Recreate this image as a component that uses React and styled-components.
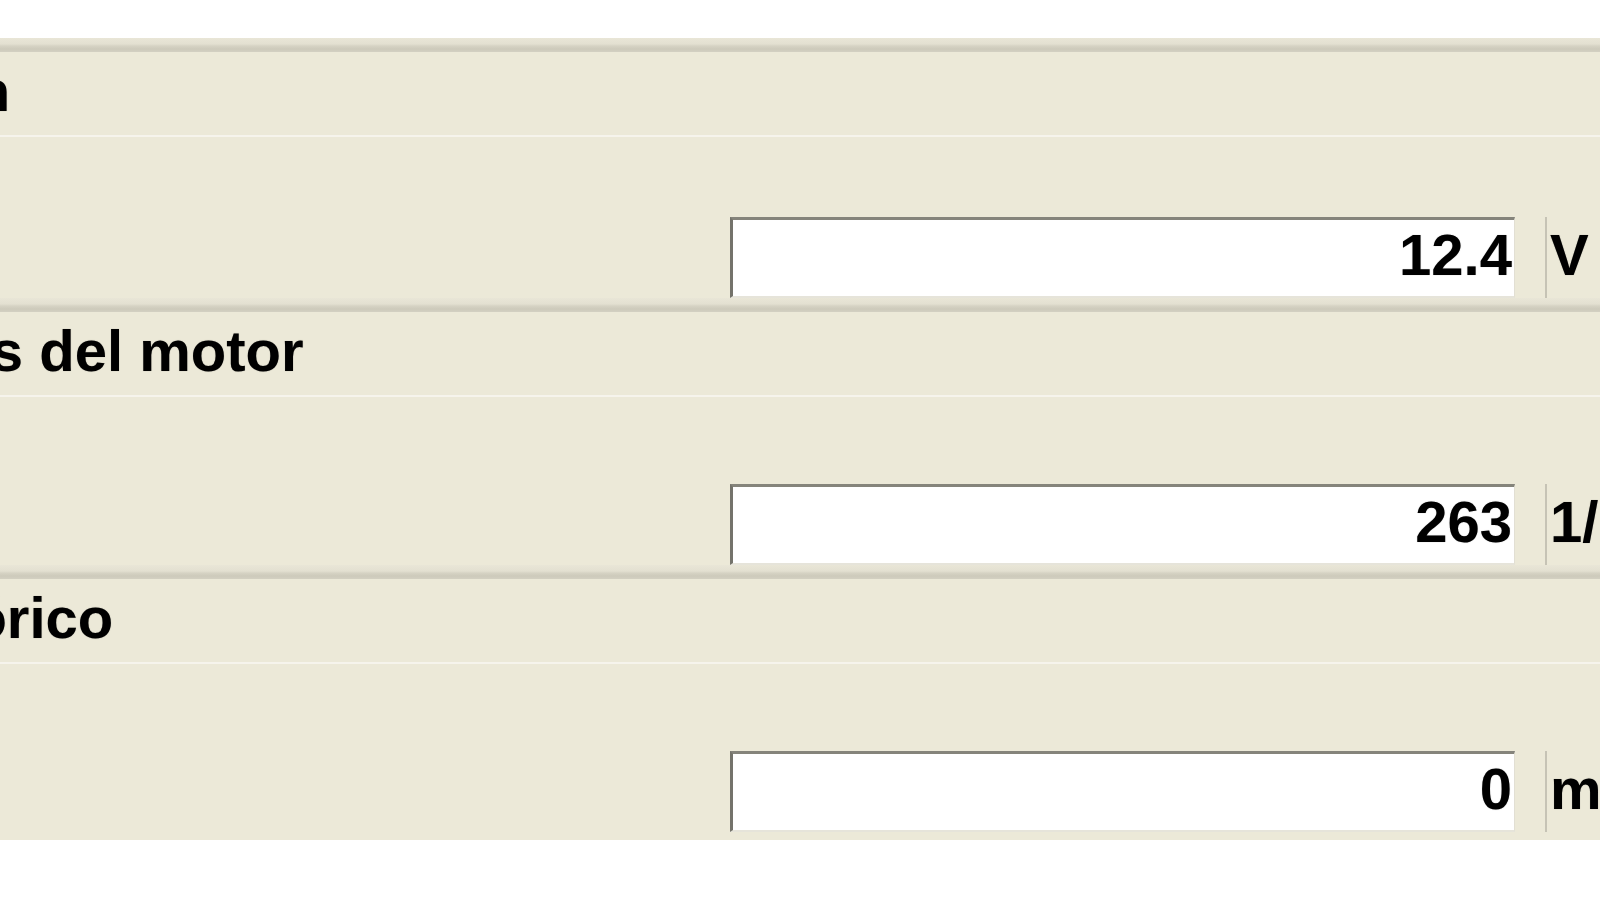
import React from 'react';
import styled, { createGlobalStyle } from 'styled-components';

const GlobalStyle = createGlobalStyle`
    html, body {
        margin: 0;
        padding: 0;
        background: #ffffff;
        overflow: hidden;
    }
    body {
        font-family: "Liberation Sans", Arial, sans-serif;
    }
`;

const sections = [
    { label: 'Alimentación', value: '12.4', unit: 'V', bodyHeight: 161 },
    { label: 'Revoluciones del motor', value: '263', unit: '1/min', bodyHeight: 168 },
    { label: 'Momento teórico', value: '0', unit: 'mNm', bodyHeight: 168 },
];

const App = () => {
    return (
        <>
            <GlobalStyle />
            <Pagina>
                <Panel>
                    {sections.map((s) => (
                        <Seccion key={s.label}>
                            <Separador />
                            <Encabezado>{s.label}</Encabezado>
                            <Cuerpo $alto={s.bodyHeight}>
                                <CampoValor>{s.value}</CampoValor>
                                <Unidad>{s.unit}</Unidad>
                            </Cuerpo>
                        </Seccion>
                    ))}
                </Panel>
            </Pagina>
        </>
    );
};

export default App;

const Pagina = styled.div`
    width: 100vw;
    height: 100vh;
    overflow: hidden;
    background: #ffffff;
    padding-top: 38px;
    box-sizing: border-box;
`;

const Panel = styled.div`
    width: 2400px;
    margin-left: -380px;
    background: #ece9d8;
    padding-bottom: 8px;
    display: flex;
    flex-direction: column;
`;

const Seccion = styled.section`
    display: flex;
    flex-direction: column;
`;

const Separador = styled.div`
    height: 14px;
    background: linear-gradient(
        to bottom,
        #e9e6d7 0px,
        #e3e0d1 6px,
        #d6d3c4 8px,
        #cdcabb 11px,
        #d3d0c2 14px
    );
`;

const Encabezado = styled.h2`
    margin: 0;
    height: 85px;
    box-sizing: border-box;
    padding: 0 0 6px 26px;
    display: flex;
    align-items: center;
    font-size: 58px;
    font-weight: 700;
    color: #000000;
    white-space: nowrap;
    border-bottom: 2px solid #f6f4ec;
    text-shadow: 0 0 1px rgba(0, 0, 0, 0.35);
`;

const Cuerpo = styled.div`
    height: ${(p) => p.$alto}px;
    padding-left: 1110px;
    display: flex;
    align-items: flex-end;
`;

const CampoValor = styled.div`
    width: 785px;
    height: 81px;
    box-sizing: border-box;
    background: #ffffff;
    border-top: 3px solid #85847b;
    border-left: 3px solid #74736b;
    border-right: 1px solid #e2dfd3;
    border-bottom: 2px solid #e6e4da;
    display: flex;
    align-items: center;
    justify-content: flex-end;
    padding: 0 2px 7px 0;
    font-size: 58px;
    font-weight: 700;
    color: #000000;
    text-shadow: 0 0 1px rgba(0, 0, 0, 0.35);
`;

const Unidad = styled.div`
    height: 81px;
    box-sizing: border-box;
    margin-left: 30px;
    padding: 0 0 7px 3px;
    border-left: 2px solid #c6c3b5;
    display: flex;
    align-items: center;
    font-size: 58px;
    font-weight: 700;
    color: #000000;
    white-space: nowrap;
    text-shadow: 0 0 1px rgba(0, 0, 0, 0.35);
`;
